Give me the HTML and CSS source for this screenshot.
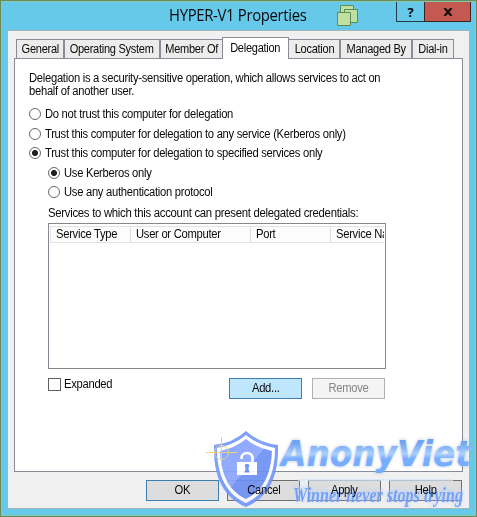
FILE: index.html
```
<!DOCTYPE html>
<html lang="en">
<head>
<meta charset="utf-8">
<title>HYPER-V1 Properties</title>
<link rel="stylesheet" href="styles.css">
</head>
<body>
<div class="window">
  <header class="titlebar">
    <h1>HYPER-V1 Properties</h1>
    <svg class="stack-icon" width="22" height="22" viewBox="0 0 22 22">
      <g fill="#bfe0a0" stroke="#5f8a55"><path d="M3.500 .5h13v12h-13z"/><path d="M7.500 4.500h13v13h-13z"/><path d="M.5 7.500h13v13h-13z"/></g>
    </svg>
    <div class="caption-buttons">
      <button class="help-btn">?</button><button class="close-btn" aria-label="Close"><svg width="10" height="8" viewBox="0 0 10 8"><path d="M1.500 0l7 8M8.500 0l-7 8" stroke="#161010" stroke-width="2.200"/></svg></button>
    </div>
  </header>
  <main class="client">
    <nav class="tabs">
      <div class="tab general"><span class="t">General</span></div>
      <div class="tab system"><span class="t">Operating System</span></div>
      <div class="tab member"><span class="t">Member Of</span></div>
      <div class="tab active"><span class="t">Delegation</span></div>
      <div class="tab location"><span class="t">Location</span></div>
      <div class="tab managed"><span class="t">Managed By</span></div>
      <div class="tab dialin"><span class="t">Dial-in</span></div>
    </nav>
    <section class="panel">
      <p class="intro"><span class="t">Delegation is a security-sensitive operation, which allows services to act on</span><br><span class="t">behalf of another user.</span></p>
      <div class="options">
        <label class="option"><i class="radio"></i><span class="t">Do not trust this computer for delegation</span></label>
        <label class="option"><i class="radio"></i><span class="t">Trust this computer for delegation to any service (Kerberos only)</span></label>
        <label class="option"><i class="radio checked"></i><span class="t">Trust this computer for delegation to specified services only</span></label>
        <label class="option nested"><i class="radio checked"></i><span class="t">Use Kerberos only</span></label>
        <label class="option nested"><i class="radio"></i><span class="t">Use any authentication protocol</span></label>
      </div>
      <div class="services">
        <div class="list-label"><span class="t wide">Services to which this account can present delegated credentials:</span></div>
        <div class="list">
          <div class="list-head"><div><span class="t">Service Type</span></div><div><span class="t">User or Computer</span></div><div><span class="t">Port</span></div><div><span class="t">Service Name</span></div></div>
        </div>
        <div class="list-actions">
          <label class="expand"><i class="checkbox"></i><span class="t">Expanded</span></label>
          <button class="btn add"><span class="t">Add...</span></button>
          <button class="btn disabled"><span class="t">Remove</span></button>
        </div>
      </div>
    </section>
    <footer class="buttons">
      <button class="btn default"><span class="t">OK</span></button>
      <button class="btn"><span class="t">Cancel</span></button>
      <button class="btn"><span class="t">Apply</span></button>
      <button class="btn"><span class="t">Help</span></button>
    </footer>
  </main>
  <svg class="watermark" width="277" height="92" viewBox="0 0 277 92">
    <defs>
      <linearGradient id="brand" x1="0" y1="0" x2="0" y2="1"><stop offset="0" stop-color="#6ea4f2"/><stop offset=".22" stop-color="#6ea4f2"/><stop offset=".5" stop-color="#a9d0ff"/><stop offset=".62" stop-color="#78adff"/><stop offset="1" stop-color="#73aeff"/></linearGradient>
      <linearGradient id="shield" x1="0" y1="0" x2="1" y2="1"><stop offset="0" stop-color="#7a9cff"/><stop offset=".5" stop-color="#8ca6ff"/><stop offset=".51" stop-color="#6b8ff3"/><stop offset="1" stop-color="#6b8ff3"/></linearGradient>
      <filter id="glow" x="-10%" y="-30%" width="120%" height="160%"><feGaussianBlur stdDeviation="1.500"/></filter>
    </defs>
    <g opacity=".9">
      <path d="M47 7Q34 19 15 21C14 52 24 73 47 83C70 73 80 52 79 21Q60 19 47 7Z" fill="#7297fb"/>
      <path d="M47 11Q35 21 18 24C18 51 27 70 47 79C67 70 76 51 76 24Q59 21 47 11Z" fill="#fff"/>
      <path d="M47 15Q36 24 21 27C22 51 30 67 47 75C64 67 72 51 73 27Q58 24 47 15Z" fill="url(#shield)"/>
      <path d="M42.500 35V34a5.500 5 0 0 1 11 0v5" fill="none" stroke="#fff" stroke-width="2.600"/>
      <rect x="38" y="38" width="20" height="13" fill="#fff"/>
      <circle cx="48" cy="42" r="2.300" fill="#648ef8"/><path d="M47 43h2l1.500 5.500h-5z" fill="#648ef8"/>
    </g>
    <g fill="none" stroke="#edcf83"><circle cx="22.500" cy="28.500" r="7"/><path d="M7 28.500h31M22.500 13v29"/></g>
    <g class="brand-name">
      <text x="82" y="42" textLength="190" lengthAdjust="spacingAndGlyphs" fill="#7b92bd" stroke="#7b92bd" opacity=".4" filter="url(#glow)">AnonyViet</text>
      <text x="82" y="42" textLength="190" lengthAdjust="spacingAndGlyphs" fill="url(#brand)">AnonyViet</text>
    </g>
    <g class="motto">
      <path d="M99 56h155" stroke="#d6e4ff" stroke-width="2" opacity=".7"/>
      <text x="94" y="77" textLength="170" lengthAdjust="spacingAndGlyphs" fill="#a7c7ff" stroke="#b9d0fa" stroke-width="3" opacity=".45" filter="url(#glow)">Winner never stops trying</text>
      <text x="94" y="78" textLength="170" lengthAdjust="spacingAndGlyphs" fill="#6a9cf8" opacity=".9">Winner never stops trying</text>
    </g>
  </svg>
</div>
</body>
</html>
```
FILE: styles.css
```
* { box-sizing: border-box; }
body { margin: 0; font: 12px/13px "Liberation Sans", Arial, sans-serif; color: #090909; letter-spacing: -.3px; }
button { font: inherit; letter-spacing: inherit; color: inherit; padding: 0; margin: 0; }
.t { display: inline-block; white-space: nowrap; transform: scaleX(.935); transform-origin: left center; }
.wide { transform: scaleX(.946); }
.window { position: relative; width: 477px; height: 517px; border: 1px solid #6c895b; box-shadow: inset 0 0 0 1px #83cdaa; background: #66c9ea; padding: 1px 7px 7px; overflow: hidden; }
.titlebar { height: 28px; display: flex; align-items: flex-start; padding-left: 161px; }
.titlebar h1 { margin: 3px 0 0; width: 138px; font: 16px/20px "Open Sans", sans-serif; letter-spacing: -.35px; white-space: nowrap; transform: scaleX(.93); transform-origin: left center; }
.stack-icon { margin: 3px 0 0 30px; }
.caption-buttons { display: flex; margin-left: auto; margin-right: -2px; }
.caption-buttons button { height: 20px; border: 1px solid #243c47; border-top: 0; display: grid; place-items: center; }
.caption-buttons .help-btn { width: 28px; background: #66c9ea; font: bold 13px/18px "Open Sans", sans-serif; border-right: 0; }
.caption-buttons .close-btn { width: 47px; background: #c35951; border-color: #3c2424; }
.client { height: 479px; background: #f0f0f0; border: 1px solid #a6b5bb; border-width: 1px 0; padding: 6px 6px 0; }
.tabs { height: 21px; display: flex; align-items: flex-end; padding-left: 2px; }
.tab { display: flex; justify-content: center; height: 19px; padding-top: 3px; border: 1px solid #898b97; border-bottom: 0; background: #ececec; }
.tab .t { transform: scaleX(.92); transform-origin: center; }
.general { width: 48px; }
.system { width: 96px; }
.member { width: 62px; border-right: 0; }
.active { width: 67px; height: 22px; margin-bottom: -1px; padding-top: 4px; background: #fff; z-index: 1; }
.location { width: 51px; border-left: 0; }
.managed { width: 72px; }
.dialin { width: 42px; }
.panel { width: 449px; height: 414px; border: 1px solid #898b97; background: #fff; padding: 13px 14px 0; }
.intro { margin: 0; height: 33px; white-space: nowrap; }
.option { height: 19.500px; display: flex; align-items: center; gap: 4px; }
.nested { margin-left: 19px; }
.radio { width: 12px; height: 12px; flex: none; margin-bottom: 1px; border: 1px solid #686868; border-radius: 50%; background: #fff; }
.checked { background: radial-gradient(circle, #202020 0 2.700px, #fff 3.300px); }
.services { margin-left: 19px; }
.list-label { height: 20px; padding-top: 4px; }
.list { width: 338px; height: 146px; border: 1px solid #828790; padding: 2px 1px; }
.list-head { height: 17px; display: grid; grid-template-columns: 80px 120px 80px 1fr; overflow: hidden; border: 1px solid #e2e2e2; border-right: 0; background: #fcfcfc; }
.list-head div { padding: 1px 0 0 5px; border-right: 1px solid #dedede; overflow: hidden; }
.list-head div:last-child { border: 0; }
.list-actions { display: flex; align-items: flex-start; margin-top: 9px; }
.expand { display: flex; width: 181px; gap: 3px; }
.checkbox { width: 13px; height: 13px; border: 1px solid #606060; }
.btn { display: flex; align-items: center; justify-content: center; width: 73px; height: 21px; border: 1px solid #707070; background: #ddd; }
.btn .t { position: relative; z-index: 2; transform-origin: center; }
.add { border-color: #3c7fb1; background: #bee6fd; margin-right: 10px; }
.disabled { border-color: #adb2b5; background: #f4f4f4; color: #858585; }
.buttons { display: flex; gap: 8px; margin: 8px 0 0 132px; }
.default { border-color: #3c7fb1; }
.watermark { position: absolute; left: 198px; top: 423px; pointer-events: none; }
.brand-name { font: italic bold 35px "DejaVu Sans", sans-serif; letter-spacing: 0; }
.motto { font: italic bold 21px "Liberation Serif", serif; letter-spacing: 0; }
```
